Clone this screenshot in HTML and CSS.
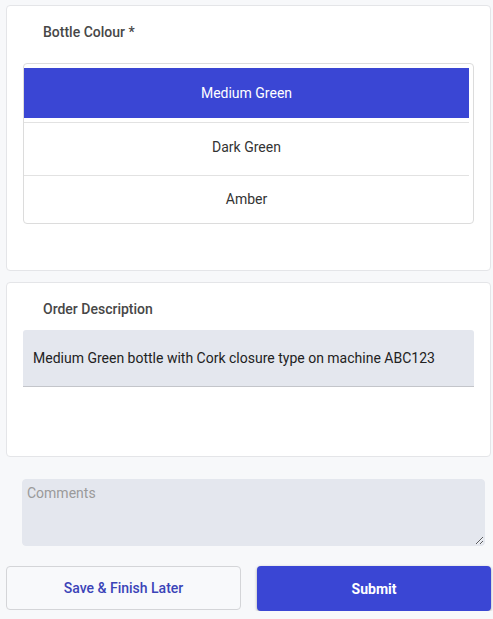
FILE: index.html
```html
<!DOCTYPE html>
<html lang="en">
<head>
<meta charset="utf-8">
<title>Order Form</title>
<link rel="stylesheet" href="styles.css">
</head>
<body>
<div class="page">
  <section class="card card-colour">
    <div class="field-label">Bottle Colour *</div>
    <div class="option-list">
      <div class="option selected">Medium Green</div>
      <div class="option">Dark Green</div>
      <div class="option last">Amber</div>
    </div>
  </section>

  <section class="card card-desc">
    <div class="field-label desc-label">Order Description</div>
    <div class="desc-box">Medium Green bottle with Cork closure type on machine ABC123</div>
  </section>

  <div class="comments-wrap">
    <textarea class="comments" placeholder="Comments"></textarea>
  </div>

  <div class="actions">
    <button class="btn btn-secondary" type="button">Save &amp; Finish Later</button>
    <button class="btn btn-primary" type="button">Submit</button>
  </div>
</div>
</body>
</html>
```

FILE: styles.css
```css
* { box-sizing: border-box; }

html, body {
  margin: 0;
  padding: 0;
  background: #f7f8fa;
  font-family: Roboto, "Liberation Sans", Arial, sans-serif;
  font-size: 14px;
  color: #333;
}

.page {
  padding: 5px 2px 0 6px;
  display: flex;
  flex-direction: column;
}

.card {
  background: #fff;
  border: 1px solid #e4e5e8;
  border-radius: 4px;
  padding: 16px 16px 0 16px;
}

.card-colour {
  height: 266px;
}

.card-desc {
  margin-top: 11px;
  height: 175px;
}

.field-label {
  padding-left: 20px;
  font-weight: 500;
  line-height: 20px;
  color: #474747;
}

.option-list {
  margin-top: 21px;
  border: 1px solid #dcdcdc;
  border-radius: 4px;
  padding: 4px 4px 1px 0;
  display: flex;
  flex-direction: column;
}

.option {
  height: 53px;
  padding-bottom: 5px;
  border-bottom: 1px solid #e2e2e2;
  display: flex;
  align-items: center;
  justify-content: center;
  color: #333;
  line-height: 20px;
  background-clip: content-box;
}

.option.selected {
  height: 55px;
  padding-bottom: 4px;
  background-color: #3a46d4;
  color: #fff;
}

.option.last {
  height: 46px;
  padding-bottom: 1px;
  border-bottom: none;
}

.desc-label {
  margin-bottom: 11px;
}

.desc-box {
  background: #e4e7ee;
  border-radius: 3px 3px 0 0;
  border-bottom: 1px solid #c3c5ca;
  height: 57px;
  padding: 0 10px;
  display: flex;
  align-items: center;
  color: #222;
  line-height: 20px;
}

.comments-wrap {
  margin-top: 22px;
  padding: 0 6px 0 16px;
  display: flex;
}

.comments {
  flex: 1;
  height: 67px;
  background: #e4e7ee;
  border: 1px solid #e4e7ee;
  border-radius: 4px;
  padding: 5px 4px;
  font-family: Roboto, "Liberation Sans", Arial, sans-serif;
  font-size: 14px;
  line-height: 17px;
  color: #333;
  display: block;
}

.comments::placeholder {
  color: #9a9a9a;
}

.actions {
  margin-top: 20px;
  display: grid;
  grid-template-columns: 235px 234px;
  justify-content: space-between;
}

.btn {
  height: 44px;
  border-radius: 4px;
  font-family: Roboto, "Liberation Sans", Arial, sans-serif;
  font-size: 14px;
  cursor: pointer;
}

.btn-secondary {
  background: #f8f9fb;
  border: 1px solid #d4d5d8;
  color: #3b44b8;
  font-weight: 500;
  padding-bottom: 2px;
}

.btn-primary {
  height: 45px;
  background: #3a46d4;
  border: none;
  color: #fff;
  font-weight: 700;
  box-shadow: 0 1px 3px rgba(0, 0, 0, 0.35);
}
```
